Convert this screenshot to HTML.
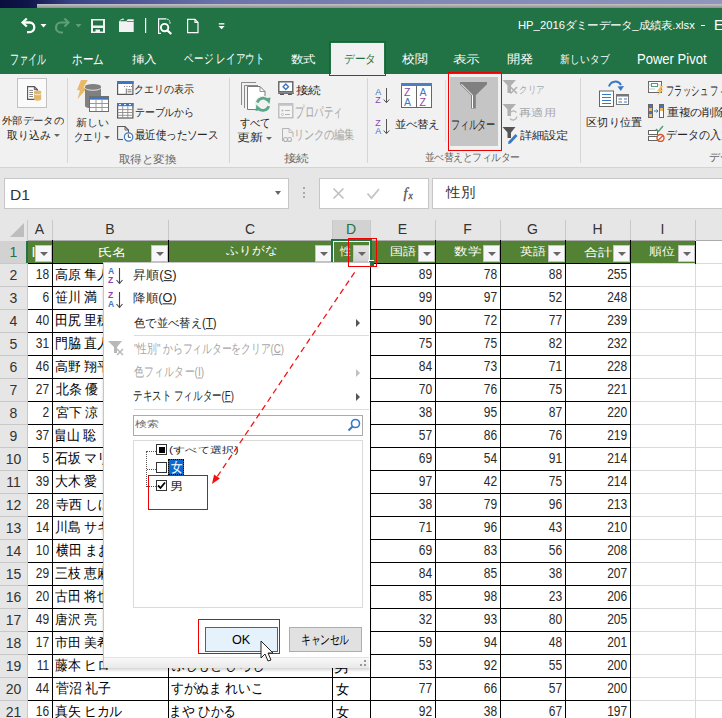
<!DOCTYPE html>
<html><head><meta charset="utf-8"><style>
*{margin:0;padding:0;box-sizing:border-box}
html,body{width:722px;height:718px;overflow:hidden;background:#e6e6e6;font-family:"Liberation Sans",sans-serif;position:relative}
.a{position:absolute}
.nw{white-space:nowrap}
.tab{color:#fff;font-size:13px;top:51px;height:16px;line-height:16px;white-space:nowrap}
.rt{font-size:12px;color:#262626;white-space:nowrap;line-height:14px}
.rd{font-size:12px;color:#a6a6a6;white-space:nowrap;line-height:14px}
.gl{font-size:12px;color:#666;white-space:nowrap;line-height:14px}
.sep{width:1px;background:#d6d6d6;top:78px;height:85px}
.colh{top:220px;height:20px;font-size:14px;color:#333;text-align:center;line-height:20px}
.rowh{left:0;width:27px;height:23px;font-size:14px;color:#333;text-align:center;line-height:23px}
.vl{width:1px;background:#cfcfcf}
.hl{height:1px;background:#cfcfcf}
.cell{font-size:14px;color:#000;white-space:nowrap;line-height:23px;height:23px;overflow:hidden}
.num{text-align:right;letter-spacing:-0.8px;padding-right:3px}
.hc{background:#548235;color:#fff;font-size:14px;line-height:23px;height:23px;white-space:nowrap;overflow:hidden}
.dd{width:17px;height:17px;background:#f7f7fa;border:1px solid #c4c4c4}
.dd:after{content:"";position:absolute;left:3.5px;top:5.5px;border-left:4px solid transparent;border-right:4px solid transparent;border-top:4.5px solid #666}
.mi{font-size:12px;color:#262626;white-space:nowrap;line-height:14px;left:134px}
.mid{font-size:12px;color:#a6a6a6;white-space:nowrap;line-height:14px;left:134px}
.u{text-decoration:underline}
.sub{width:0;height:0;border-top:4px solid transparent;border-bottom:4px solid transparent;border-left:4px solid #555}
</style></head><body>
<div class="a" style="left:0;top:0;width:722px;height:8px;background:linear-gradient(90deg,#0a0e3c 0%,#10154a 4%,#3a4388 10%,#6a72aa 30%,#8088b4 60%,#9096bc 100%)"></div>
<div class="a" style="left:37px;top:4px;width:685px;height:4px;background:linear-gradient(180deg,#c4c4c4,#8f8f8f)"></div>
<div class="a" style="left:0;top:8px;width:722px;height:66px;background:#217346"></div>
<svg class="a" style="left:0;top:8px" width="722" height="36" viewBox="0 8 722 36">
<g fill="none" stroke="#fff" stroke-width="2.3">
<path d="M23 22.5 H29.5 A4.8 4.8 0 0 1 29.5 32.1 H27"/>
<path d="M26.8 18.5 L22.6 22.5 L26.8 26.5"/>
</g>
<path d="M40.5 24 H46.5 L43.5 27.5Z" fill="#fff"/>
<g fill="none" stroke="#5e9f7a" stroke-width="2.2">
<path d="M68 22.5 H61 A5 5 0 0 0 61 32.5 H63"/>
<path d="M64.5 18.5 L68.5 22.5 L64.5 26.5"/>
</g>
<path d="M75.5 24 H81.5 L78.5 27.5Z" fill="#5e9f7a"/>
<path fill="#f2f2f2" fill-rule="evenodd" d="M91 19H105V33H91Z M93 20.5V25.4H103V20.5Z M93 28.1V31.5H95.5V29.4H100V31.5H103V28.1Z"/>
<path fill="#f2f2f2" d="M119 21.2H126.2L127.8 19.2H133.7V32H119Z"/>
<path fill="#217346" d="M127 21.2H133.7V21.9H126.4Z"/>
<path d="M119.6 21 Q120.5 19.3 123.3 19.3" fill="none" stroke="#f2f2f2" stroke-width="0.9"/>
<path d="M122.5 18.3L124.3 19.3L122.5 20.3Z" fill="#f2f2f2"/>
<rect x="145" y="18" width="1.2" height="15" fill="#fff"/>
<g fill="none" stroke="#fff" stroke-width="1.2">
<path d="M161 33.4H158.6V18.8H166.5"/>
<path d="M167.5 19L170 21.5V24.5" stroke-dasharray="1.2,1"/>
<circle cx="164.6" cy="27.6" r="3.7" stroke-width="1.9"/>
<path d="M167.3 30.4L171.3 34" stroke-width="2.2"/>
<path d="M187.6 32.6V19.4H195L198 22.4V32.6Z"/>
<path d="M195 19.4V22.4H198"/>
</g>
<rect x="218.8" y="23.2" width="5.6" height="1.3" fill="#fff"/>
<path d="M218.5 26H224.7L221.6 29.2Z" fill="#fff"/>
</svg>
<div class="a nw" style="left:518.14px;top:17.86px;font-size:13px;line-height:17px;color:#fff;transform-origin:0 0;transform:scale(0.865,0.821);">HP_2016ダミーデータ_成績表.xlsx</div>
<div class="a" style="left:701px;top:25px;width:4px;height:1px;background:#fff"></div>
<div class="a nw" style="left:714.43px;top:15.38px;font-size:13px;line-height:17px;color:#fff;transform-origin:0 0;transform:scale(1.071,1.156);">E</div>
<div class="a nw" style="left:9.82px;top:50.02px;font-size:13px;line-height:17px;color:#fff;transform-origin:0 0;transform:scale(0.688,1.070);">ファイル</div>
<div class="a nw" style="left:71.99px;top:50.02px;font-size:13px;line-height:17px;color:#fff;transform-origin:0 0;transform:scale(0.808,1.070);">ホーム</div>
<div class="a nw" style="left:132.10px;top:52.04px;font-size:13px;line-height:17px;color:#fff;transform-origin:0 0;transform:scale(0.948,0.831);">挿入</div>
<div class="a nw" style="left:183.75px;top:49.59px;font-size:13px;line-height:17px;color:#fff;transform-origin:0 0;transform:scale(0.752,1.027);">ページ レイアウト</div>
<div class="a nw" style="left:291.26px;top:52.04px;font-size:13px;line-height:17px;color:#fff;transform-origin:0 0;transform:scale(0.944,0.831);">数式</div>
<div class="a nw" style="left:401.50px;top:51.00px;font-size:13px;line-height:17px;color:#fff;transform-origin:0 0;transform:scale(0.964,0.900);">校閲</div>
<div class="a nw" style="left:453.06px;top:52.04px;font-size:13px;line-height:17px;color:#fff;transform-origin:0 0;transform:scale(1.037,0.831);">表示</div>
<div class="a nw" style="left:506.70px;top:51.00px;font-size:13px;line-height:17px;color:#fff;transform-origin:0 0;transform:scale(1.000,0.900);">開発</div>
<div class="a nw" style="left:560.13px;top:51.96px;font-size:13px;line-height:17px;color:#fff;transform-origin:0 0;transform:scale(0.767,0.869);">新しいタブ</div>
<div class="a nw" style="left:637.40px;top:49.33px;font-size:13px;line-height:17px;color:#fff;transform-origin:0 0;transform:scale(1.003,1.167);">Power Pivot</div>
<div class="a" style="left:331px;top:43px;width:53px;height:32px;background:#f1f1f1"></div>
<div class="a nw" style="left:343.58px;top:51.25px;font-size:13px;line-height:17px;color:#217346;transform-origin:0 0;transform:scale(0.817,0.917);">データ</div>
<div class="a" style="left:0;top:74px;width:722px;height:94px;background:#f1f1f1;border-bottom:1px solid #d4d4d4"></div>
<div class="a sep" style="left:67px"></div>
<div class="a sep" style="left:229px"></div>
<div class="a sep" style="left:367px"></div>
<div class="a sep" style="left:580px"></div>
<div class="a" style="left:445px;top:80px;width:1px;height:62px;background:#dcdcdc"></div>
<div class="a" style="left:17px;top:78px;width:30px;height:30px;background:#fafafa;border:1px solid #c2c2c2"></div>
<svg class="a" style="left:12px;top:74px" width="40" height="40">
<path d="M15.6 12.6H22.3L25.3 15.6V25.4H15.6Z" fill="#fff" stroke="#555" stroke-width="1.1"/>
<path d="M22.3 12.6V15.6H25.3" fill="none" stroke="#555" stroke-width="1"/>
<path d="M17.3 16.4H21M17.3 18.5H21M17.3 20.5H21M17.3 22.5H21" stroke="#777" stroke-width="0.9"/>
<path d="M22 17.8V25.3A3.6 1.4 0 0 0 29.2 25.3V17.8Z" fill="#e4b86a"/>
<ellipse cx="25.6" cy="17.8" rx="3.6" ry="1.4" fill="#e4b86a"/>
<path d="M22 19.4A3.6 1.4 0 0 0 29.2 19.4" fill="none" stroke="#fff" stroke-width="0.7"/>
</svg>
<div class="a nw" style="left:2.00px;top:114.13px;font-size:12px;line-height:16px;color:#262626;transform-origin:0 0;transform:scale(0.861,0.833);">外部データの</div>
<div class="a nw" style="left:6.59px;top:127.85px;font-size:12px;line-height:16px;color:#262626;transform-origin:0 0;transform:scale(0.913,0.925);">取り込み</div>
<div class="a" style="left:54px;top:134px;border-left:3px solid transparent;border-right:3px solid transparent;border-top:3px solid #666"></div>
<svg class="a" style="left:70px;top:74px" width="45" height="42">
<path d="M11 6H17.8L13.5 13.5L17 14.2L7.5 25L10 16.5L7 16Z" fill="#e9b96a"/>
<path d="M15 13V32A8 2.5 0 0 0 31 32V13Z" fill="#808080"/>
<ellipse cx="23" cy="12.5" rx="8" ry="2.6" fill="#808080"/>
<path d="M15.2 14.2A8 2.6 0 0 0 30.8 14.2" fill="none" stroke="#fff" stroke-width="0.8"/>
<rect x="19.5" y="22.5" width="19" height="15" fill="#fff" stroke="#7a7a7a" stroke-width="1"/>
<rect x="19.5" y="22.5" width="19" height="3.2" fill="#3f76bf"/>
<path d="M19.5 29.5H38.5M19.5 33.5H38.5M26 25.7V37.5M32 25.7V37.5" stroke="#9a9a9a" stroke-width="1"/>
<rect x="19.5" y="22.5" width="19" height="15" fill="none" stroke="#6f6f6f" stroke-width="1"/>
</svg>
<div class="a nw" style="left:75.88px;top:115.83px;font-size:12px;line-height:16px;color:#262626;transform-origin:0 0;transform:scale(0.918,0.833);">新しい</div>
<div class="a nw" style="left:74.45px;top:128.75px;font-size:12px;line-height:16px;color:#262626;transform-origin:0 0;transform:scale(0.774,0.982);">クエリ</div>
<div class="a" style="left:104px;top:136px;border-left:3px solid transparent;border-right:3px solid transparent;border-top:3px solid #666"></div>
<svg class="a" style="left:112px;top:76px" width="30" height="70">
<rect x="5.6" y="5.6" width="15.3" height="12.8" fill="#fff" stroke="#5a5a5a" stroke-width="1.2"/>
<rect x="5" y="5" width="16.5" height="3" fill="#3f76bf"/>
<path d="M12 10.5H13M14.5 10.5H15.5M17 10.5H18M19 10.5H20" stroke="#777" stroke-width="0.9"/>
<path d="M14.3 12.5V18.4M15.5 13.8H19.5M15.5 15.8H19.5" stroke="#777" stroke-width="1"/>
<rect x="5.6" y="27.6" width="15.3" height="14.4" fill="#fff" stroke="#5a5a5a" stroke-width="1.2"/>
<rect x="5" y="27" width="16.5" height="3.2" fill="#3f76bf"/>
<path d="M7 28.6H9M12 28.6H14M17 28.6H19" stroke="#fff" stroke-width="1"/>
<path d="M5.6 33.6H20.9M5.6 36.5H20.9M5.6 39.3H20.9M10.7 30.2V42M15.8 30.2V42" stroke="#8a8a8a" stroke-width="0.9"/>
<path d="M5.6 63.5V50.5H13L16.5 54V58" fill="none" stroke="#5a5a5a" stroke-width="1.1"/>
<path d="M5.6 63.5H11" fill="none" stroke="#5a5a5a" stroke-width="1.1"/>
<path d="M13 50.5V54H16.5" fill="none" stroke="#5a5a5a" stroke-width="0.9"/>
<circle cx="16.6" cy="61" r="4.2" fill="#fff" stroke="#3b78c4" stroke-width="1.2"/>
<path d="M16.3 58.3V61.3H18.8" fill="none" stroke="#444" stroke-width="1"/>
</svg>
<div class="a nw" style="left:134.14px;top:81.57px;font-size:12px;line-height:16px;color:#262626;transform-origin:0 0;transform:scale(0.829,0.909);">クエリの表示</div>
<div class="a nw" style="left:135.18px;top:105.00px;font-size:12px;line-height:16px;color:#262626;transform-origin:0 0;transform:scale(0.816,0.900);">テーブルから</div>
<div class="a nw" style="left:135.14px;top:127.35px;font-size:12px;line-height:16px;color:#262626;transform-origin:0 0;transform:scale(0.865,0.975);">最近使ったソース</div>
<div class="a nw" style="left:119.34px;top:151.50px;font-size:12px;line-height:16px;color:#666;transform-origin:0 0;transform:scale(0.957,0.900);">取得と変換</div>
<svg class="a" style="left:234px;top:76px" width="40" height="40">
<path d="M7.5 29V6.5H22" fill="none" stroke="#8a8a8a" stroke-width="1"/>
<path d="M10.5 32V9.5H24" fill="none" stroke="#8a8a8a" stroke-width="1"/>
<path d="M13.5 33.5V10.5H26L31 15.5V33.5Z" fill="#fff" stroke="#7a7a7a" stroke-width="1"/>
<path d="M26 10.5V15.5H31" fill="none" stroke="#7a7a7a" stroke-width="0.8"/>
<circle cx="29" cy="28.3" r="8.5" fill="#f1f1f1"/>
<path d="M23.3 26.5A6 6 0 0 1 33.6 24.3" fill="none" stroke="#5ba889" stroke-width="2.8"/>
<path d="M34.7 30.1A6 6 0 0 1 24.4 32.3" fill="none" stroke="#5ba889" stroke-width="2.8"/>
<path d="M30.5 22.5L36.5 21.5L35.5 28Z" fill="#5ba889"/>
<path d="M27.5 34.1L21.5 35.1L22.5 28.6Z" fill="#5ba889"/>
</svg>
<div class="a nw" style="left:239.70px;top:114.78px;font-size:12px;line-height:16px;color:#262626;transform-origin:0 0;transform:scale(0.826,0.973);">すべて</div>
<div class="a nw" style="left:236.75px;top:130.42px;font-size:12px;line-height:16px;color:#262626;transform-origin:0 0;transform:scale(1.055,0.892);">更新</div>
<div class="a" style="left:265.5px;top:137px;border-left:3px solid transparent;border-right:3px solid transparent;border-top:3px solid #666"></div>
<svg class="a" style="left:277px;top:80px" width="18" height="64">
<rect x="1.8" y="1.8" width="14" height="10" fill="#fff" stroke="#555" stroke-width="1.3"/>
<path d="M1 13.2H17" stroke="#555" stroke-width="1.2"/>
<path d="M3 14.5H7M11 14.5H15" stroke="#555" stroke-width="1"/>
<path d="M8.8 4L11.5 6.8L8.8 9.6L6.1 6.8Z" fill="none" stroke="#3b78c4" stroke-width="1.4"/>
<rect x="1.8" y="23.8" width="14" height="14" fill="#f4f4f4" stroke="#b4b4b4" stroke-width="1.2"/>
<rect x="1.8" y="23.8" width="14" height="2" fill="#c4c4c4"/>
<circle cx="5.5" cy="30.5" r="1" fill="#b4b4b4"/><circle cx="5.5" cy="34.5" r="1" fill="none" stroke="#b4b4b4" stroke-width="0.8"/>
<path d="M8 30.5H13M8 34.5H13" stroke="#b4b4b4" stroke-width="1"/>
<path d="M5.5 61V48.5H12L16 52.5V57" fill="none" stroke="#b4b4b4" stroke-width="1"/>
<path d="M12 48.5V52.5H16" fill="none" stroke="#b4b4b4" stroke-width="0.8"/>
<path d="M6.5 59.5a2 2 0 0 1 4 0a2 2 0 0 0 4 0a2 2 0 0 0 -4 0a2 2 0 0 1 -4 0" fill="none" stroke="#b4b4b4" stroke-width="1.1"/>
</svg>
<div class="a nw" style="left:295.87px;top:82.92px;font-size:12px;line-height:16px;color:#262626;transform-origin:0 0;transform:scale(1.035,0.892);">接続</div>
<div class="a nw" style="left:295.41px;top:101.98px;font-size:12px;line-height:16px;color:#a6a6a6;transform-origin:0 0;transform:scale(0.795,1.256);">プロパティ</div>
<div class="a nw" style="left:294.48px;top:126.11px;font-size:12px;line-height:16px;color:#a6a6a6;transform-origin:0 0;transform:scale(0.840,1.064);">リンクの編集</div>
<div class="a nw" style="left:284.27px;top:150.82px;font-size:12px;line-height:16px;color:#666;transform-origin:0 0;transform:scale(1.035,0.892);">接続</div>
<svg class="a" style="left:374px;top:84px" width="18" height="52">
<text x="1.3" y="10.5" font-size="9" font-family="Liberation Sans" fill="#3b78c4">A</text>
<text x="1.3" y="18.7" font-size="9" font-family="Liberation Sans" fill="#8e44ad">Z</text>
<path d="M12.5 4V18.5M9.7 15.5L12.5 18.7L15.3 15.5" fill="none" stroke="#555" stroke-width="1"/>
<text x="1.3" y="42" font-size="9" font-family="Liberation Sans" fill="#8e44ad">Z</text>
<text x="1.3" y="50" font-size="9" font-family="Liberation Sans" fill="#3b78c4">A</text>
<path d="M12.5 35V49.5M9.7 46.5L12.5 49.7L15.3 46.5" fill="none" stroke="#555" stroke-width="1"/>
</svg>
<svg class="a" style="left:401px;top:83px" width="31" height="25">
<rect x="0.5" y="0.5" width="30" height="24" fill="#fff" stroke="#666"/>
<rect x="0" y="0" width="31" height="3" fill="#4a7fc1"/>
<path d="M15.5 3V24.5" stroke="#666"/>
<text x="3" y="13" font-size="10.5" font-family="Liberation Sans" fill="#8e44ad">Z</text>
<text x="3" y="23" font-size="10.5" font-family="Liberation Sans" fill="#3b78c4">A</text>
<text x="18.5" y="13" font-size="10.5" font-family="Liberation Sans" fill="#3b78c4">A</text>
<text x="18.5" y="23" font-size="10.5" font-family="Liberation Sans" fill="#8e44ad">Z</text>
</svg>
<div class="a nw" style="left:394.57px;top:116.93px;font-size:12px;line-height:16px;color:#262626;transform-origin:0 0;transform:scale(0.926,0.883);">並べ替え</div>
<div class="a" style="left:450px;top:77px;width:48px;height:69px;background:#c5c5c5"></div>
<svg class="a" style="left:450px;top:77px" width="48" height="40">
<path d="M10 5H37V7.2L25.8 18.2V31.6H21V18.2L10 7.2Z" fill="#808080"/>
<path d="M11.5 7.2L22.5 18.2V31" fill="none" stroke="#fff" stroke-width="1"/>
</svg>
<div class="a nw" style="left:451.06px;top:115.56px;font-size:12px;line-height:16px;color:#262626;transform-origin:0 0;transform:scale(0.736,1.045);">フィルター</div>
<div class="a" style="left:448px;top:72px;width:54px;height:79px;border:1.5px solid #f00000"></div>
<svg class="a" style="left:501px;top:78px" width="20" height="66">
<path d="M1.5 2H15L10 7.5V15H6.5V7.5Z" fill="#b0b0b0"/>
<path d="M9.5 9L16 15.5M16 9L9.5 15.5" stroke="#b0b0b0" stroke-width="1.5"/>
<path d="M1.5 26H15L10 31.5V38H6.5V31.5Z" fill="#b0b0b0"/>
<path d="M8.6 36.5A3.8 3.8 0 0 1 15.4 34.5M15.8 38.5A3.8 3.8 0 0 1 9 40.5" fill="none" stroke="#b8b8b8" stroke-width="1.3"/>
<path d="M1.5 49H14.5L10 54.5V60H6.5V54.5Z" fill="#555"/>
<path d="M7.5 63.5L14.5 56L16.5 58L9.5 65.5L7 66Z" fill="#3b78c4"/>
</svg>
<div class="a nw" style="left:518.96px;top:82.59px;font-size:12px;line-height:16px;color:#a6a6a6;transform-origin:0 0;transform:scale(0.721,0.836);">クリア</div>
<div class="a nw" style="left:518.96px;top:105.68px;font-size:12px;line-height:16px;color:#a6a6a6;transform-origin:0 0;transform:scale(1.041,0.858);">再適用</div>
<div class="a nw" style="left:520.40px;top:127.52px;font-size:12px;line-height:16px;color:#262626;transform-origin:0 0;transform:scale(1.004,0.892);">詳細設定</div>
<div class="a nw" style="left:425.21px;top:150.43px;font-size:12px;line-height:16px;color:#666;transform-origin:0 0;transform:scale(0.787,0.883);">並べ替えとフィルター</div>
<svg class="a" style="left:594px;top:76px" width="40" height="34">
<path d="M15 10.5A6.5 6.5 0 0 1 27 9" fill="none" stroke="#3b78c4" stroke-width="2"/>
<path d="M23.5 10.5L26.8 15L30 10Z" fill="#3b78c4"/>
<rect x="5.5" y="15" width="14" height="15.5" fill="#fff" stroke="#666" stroke-width="1"/>
<path d="M8 18.5H17M8 21.5H17M8 24.5H17M8 27.5H17" stroke="#3b78c4" stroke-width="1"/>
<rect x="22.5" y="18.5" width="12" height="10" fill="#fff" stroke="#777" stroke-width="1"/>
<rect x="22" y="18" width="13" height="2.5" fill="#777"/>
<path d="M24.5 23H28M30 23H33M24.5 26H28M30 26H33" stroke="#3b78c4" stroke-width="1"/>
</svg>
<div class="a nw" style="left:585.96px;top:115.03px;font-size:12px;line-height:16px;color:#262626;transform-origin:0 0;transform:scale(0.940,0.933);">区切り位置</div>
<svg class="a" style="left:647px;top:80px" width="18" height="62">
<rect x="1.5" y="1.5" width="13" height="11" fill="#fff" stroke="#666" stroke-width="1"/>
<path d="M1.5 5H14.5M1.5 9H8" stroke="#bbb" stroke-width="0.8"/>
<rect x="4.5" y="3.5" width="6" height="3" fill="#fff" stroke="#4ea27a" stroke-width="1"/>
<path d="M13.5 6L10 11.5H12.5L10 16L16.5 9.5H14L16 6Z" fill="#efbf5f"/>
<rect x="1.5" y="24.5" width="4" height="13" fill="#fff" stroke="#666" stroke-width="1"/>
<rect x="2" y="25" width="3" height="3" fill="#3f76bf"/><rect x="2" y="28" width="3" height="3" fill="#e8b864"/><rect x="2" y="31" width="3" height="3" fill="#3f76bf"/><rect x="2" y="34" width="3" height="3" fill="#e8b864"/>
<rect x="12.5" y="24.5" width="4" height="13" fill="#fff" stroke="#666" stroke-width="1"/>
<rect x="13" y="25" width="3" height="3" fill="#3f76bf"/><rect x="13" y="28" width="3" height="3" fill="#e8b864"/>
<path d="M7 31H11M9.5 29.5L11 31L9.5 32.5" stroke="#3b78c4" fill="none" stroke-width="1"/>
<rect x="1.5" y="50.5" width="9" height="4" fill="#fff" stroke="#666"/>
<rect x="1.5" y="56.5" width="9" height="4" fill="#fff" stroke="#666"/>
<path d="M9 49L11.5 51.5L16 46" fill="none" stroke="#4ea27a" stroke-width="1.5"/>
<circle cx="13.5" cy="58" r="3.5" fill="#fff" stroke="#d9542b" stroke-width="1.4"/>
<path d="M11 60.5L16 55.5" stroke="#d9542b" stroke-width="1.2"/>
</svg>
<div class="a nw" style="left:665.80px;top:81.53px;font-size:12px;line-height:16px;color:#262626;transform-origin:0 0;transform:scale(0.699,1.090);">フラッシュ フィル</div>
<div class="a nw" style="left:666.50px;top:104.70px;font-size:12px;line-height:16px;color:#262626;transform-origin:0 0;transform:scale(0.975,0.900);">重複の削除</div>
<div class="a nw" style="left:665.59px;top:127.12px;font-size:12px;line-height:16px;color:#262626;transform-origin:0 0;transform:scale(0.910,0.992);">データの入力規則</div>
<div class="a nw" style="left:708.85px;top:149.89px;font-size:12px;line-height:16px;color:#666;transform-origin:0 0;transform:scale(0.949,0.936);">データ ツール</div>
<div class="a" style="left:0;top:168px;width:722px;height:52px;background:#e6e6e6"></div>
<div class="a" style="left:4px;top:178px;width:285px;height:31px;background:#fff;border:1px solid #c6c6c6"></div>
<div class="a nw" style="left:10.39px;top:184.60px;font-size:14px;line-height:18px;color:#333;transform-origin:0 0;transform:scale(1.113,1.100);">D1</div>
<div class="a" style="left:275px;top:191px;width:0;height:0;border-left:3.5px solid transparent;border-right:3.5px solid transparent;border-top:4px solid #666"></div>
<div class="a" style="left:303px;top:187px;width:2px;height:2px;background:#aaa"></div>
<div class="a" style="left:303px;top:191.5px;width:2px;height:2px;background:#aaa"></div>
<div class="a" style="left:303px;top:196px;width:2px;height:2px;background:#aaa"></div>
<div class="a" style="left:319px;top:178px;width:110px;height:31px;background:#fff;border:1px solid #c6c6c6"></div>
<svg class="a" style="left:319px;top:178px" width="110" height="31">
<path d="M14.5 10.5L24.5 20.5M24.5 10.5L14.5 20.5" stroke="#bdbdbd" stroke-width="1.5"/>
<path d="M48.5 15.5L52.5 20L60 11" fill="none" stroke="#c4c4c4" stroke-width="1.8"/>
<text x="84.5" y="20" font-size="14" font-style="italic" font-family="Liberation Serif" fill="#555" stroke="#555" stroke-width="0.3">f</text>
<text x="89.5" y="20.5" font-size="9.5" font-style="italic" font-family="Liberation Serif" fill="#555" stroke="#555" stroke-width="0.3">x</text>
</svg>
<div class="a" style="left:432px;top:178px;width:300px;height:31px;background:#fff;border:1px solid #c6c6c6"></div>
<div class="a nw" style="left:446.00px;top:182.85px;font-size:14px;line-height:18px;color:#333;transform-origin:0 0;transform:scale(1.048,1.015);">性別</div>
<div class="a" style="left:0;top:220px;width:722px;height:21px;background:#e6e6e6;border-bottom:1px solid #ababab"></div>
<svg class="a" style="left:0;top:220px" width="27" height="20"><path d="M24 3V17H10Z" fill="#bdbdbd"/></svg>
<div class="a" style="left:332px;top:220px;width:38px;height:20px;background:#d2d2d2"></div>
<div class="a" style="left:27px;top:221px;width:25px;font-size:14px;line-height:16px;text-align:center;color:#333">A</div>
<div class="a vl" style="left:52px;top:220px;height:20px;background:#c8c8c8"></div>
<div class="a" style="left:52px;top:221px;width:116px;font-size:14px;line-height:16px;text-align:center;color:#333">B</div>
<div class="a vl" style="left:168px;top:220px;height:20px;background:#c8c8c8"></div>
<div class="a" style="left:168px;top:221px;width:164px;font-size:14px;line-height:16px;text-align:center;color:#333">C</div>
<div class="a vl" style="left:332px;top:220px;height:20px;background:#c8c8c8"></div>
<div class="a" style="left:332px;top:221px;width:38px;font-size:14px;line-height:16px;text-align:center;color:#217346">D</div>
<div class="a vl" style="left:370px;top:220px;height:20px;background:#c8c8c8"></div>
<div class="a" style="left:370px;top:221px;width:65px;font-size:14px;line-height:16px;text-align:center;color:#333">E</div>
<div class="a vl" style="left:435px;top:220px;height:20px;background:#c8c8c8"></div>
<div class="a" style="left:435px;top:221px;width:65px;font-size:14px;line-height:16px;text-align:center;color:#333">F</div>
<div class="a vl" style="left:500px;top:220px;height:20px;background:#c8c8c8"></div>
<div class="a" style="left:500px;top:221px;width:65px;font-size:14px;line-height:16px;text-align:center;color:#333">G</div>
<div class="a vl" style="left:565px;top:220px;height:20px;background:#c8c8c8"></div>
<div class="a" style="left:565px;top:221px;width:65px;font-size:14px;line-height:16px;text-align:center;color:#333">H</div>
<div class="a vl" style="left:630px;top:220px;height:20px;background:#c8c8c8"></div>
<div class="a" style="left:630px;top:221px;width:65px;font-size:14px;line-height:16px;text-align:center;color:#333">I</div>
<div class="a vl" style="left:695px;top:220px;height:20px;background:#c8c8c8"></div>
<div class="a" style="left:695px;top:221px;width:65px;font-size:14px;line-height:16px;text-align:center;color:#333">J</div>
<div class="a vl" style="left:760px;top:220px;height:20px;background:#c8c8c8"></div>
<div class="a vl" style="left:27px;top:220px;height:20px;background:#c8c8c8"></div>
<div class="a" style="left:28px;top:241px;width:694px;height:477px;background:#fff"></div>
<div class="a" style="left:0;top:240px;width:27px;height:478px;background:#e6e6e6"></div>
<div class="a" style="left:0;top:241px;width:27px;height:22px;background:#d2d2d2"></div>
<div class="a" style="left:0;top:244px;width:27px;font-size:14px;line-height:16px;text-align:center;color:#217346">1</div>
<div class="a hl" style="left:0;top:263px;width:27px;background:#c8c8c8"></div>
<div class="a" style="left:0;top:267px;width:27px;font-size:14px;line-height:16px;text-align:center;color:#333">2</div>
<div class="a hl" style="left:0;top:286px;width:27px;background:#c8c8c8"></div>
<div class="a" style="left:0;top:290px;width:27px;font-size:14px;line-height:16px;text-align:center;color:#333">3</div>
<div class="a hl" style="left:0;top:309px;width:27px;background:#c8c8c8"></div>
<div class="a" style="left:0;top:313px;width:27px;font-size:14px;line-height:16px;text-align:center;color:#333">4</div>
<div class="a hl" style="left:0;top:332px;width:27px;background:#c8c8c8"></div>
<div class="a" style="left:0;top:336px;width:27px;font-size:14px;line-height:16px;text-align:center;color:#333">5</div>
<div class="a hl" style="left:0;top:355px;width:27px;background:#c8c8c8"></div>
<div class="a" style="left:0;top:359px;width:27px;font-size:14px;line-height:16px;text-align:center;color:#333">6</div>
<div class="a hl" style="left:0;top:378px;width:27px;background:#c8c8c8"></div>
<div class="a" style="left:0;top:382px;width:27px;font-size:14px;line-height:16px;text-align:center;color:#333">7</div>
<div class="a hl" style="left:0;top:401px;width:27px;background:#c8c8c8"></div>
<div class="a" style="left:0;top:405px;width:27px;font-size:14px;line-height:16px;text-align:center;color:#333">8</div>
<div class="a hl" style="left:0;top:424px;width:27px;background:#c8c8c8"></div>
<div class="a" style="left:0;top:428px;width:27px;font-size:14px;line-height:16px;text-align:center;color:#333">9</div>
<div class="a hl" style="left:0;top:447px;width:27px;background:#c8c8c8"></div>
<div class="a" style="left:0;top:451px;width:27px;font-size:14px;line-height:16px;text-align:center;color:#333">10</div>
<div class="a hl" style="left:0;top:470px;width:27px;background:#c8c8c8"></div>
<div class="a" style="left:0;top:474px;width:27px;font-size:14px;line-height:16px;text-align:center;color:#333">11</div>
<div class="a hl" style="left:0;top:493px;width:27px;background:#c8c8c8"></div>
<div class="a" style="left:0;top:497px;width:27px;font-size:14px;line-height:16px;text-align:center;color:#333">12</div>
<div class="a hl" style="left:0;top:516px;width:27px;background:#c8c8c8"></div>
<div class="a" style="left:0;top:520px;width:27px;font-size:14px;line-height:16px;text-align:center;color:#333">13</div>
<div class="a hl" style="left:0;top:539px;width:27px;background:#c8c8c8"></div>
<div class="a" style="left:0;top:543px;width:27px;font-size:14px;line-height:16px;text-align:center;color:#333">14</div>
<div class="a hl" style="left:0;top:562px;width:27px;background:#c8c8c8"></div>
<div class="a" style="left:0;top:566px;width:27px;font-size:14px;line-height:16px;text-align:center;color:#333">15</div>
<div class="a hl" style="left:0;top:585px;width:27px;background:#c8c8c8"></div>
<div class="a" style="left:0;top:589px;width:27px;font-size:14px;line-height:16px;text-align:center;color:#333">16</div>
<div class="a hl" style="left:0;top:608px;width:27px;background:#c8c8c8"></div>
<div class="a" style="left:0;top:612px;width:27px;font-size:14px;line-height:16px;text-align:center;color:#333">17</div>
<div class="a hl" style="left:0;top:631px;width:27px;background:#c8c8c8"></div>
<div class="a" style="left:0;top:635px;width:27px;font-size:14px;line-height:16px;text-align:center;color:#333">18</div>
<div class="a hl" style="left:0;top:654px;width:27px;background:#c8c8c8"></div>
<div class="a" style="left:0;top:658px;width:27px;font-size:14px;line-height:16px;text-align:center;color:#333">19</div>
<div class="a hl" style="left:0;top:677px;width:27px;background:#c8c8c8"></div>
<div class="a" style="left:0;top:681px;width:27px;font-size:14px;line-height:16px;text-align:center;color:#333">20</div>
<div class="a hl" style="left:0;top:700px;width:27px;background:#c8c8c8"></div>
<div class="a" style="left:0;top:704px;width:27px;font-size:14px;line-height:16px;text-align:center;color:#333">21</div>
<div class="a hl" style="left:0;top:723px;width:27px;background:#c8c8c8"></div>
<div class="a" style="left:27px;top:240px;width:1px;height:478px;background:#c8c8c8"></div>
<div class="a" style="left:26px;top:241px;width:2px;height:22px;background:#217346"></div>
<div class="a hl" style="left:630px;top:263px;width:92px;background:#dadada"></div>
<div class="a hl" style="left:630px;top:286px;width:92px;background:#dadada"></div>
<div class="a hl" style="left:630px;top:309px;width:92px;background:#dadada"></div>
<div class="a hl" style="left:630px;top:332px;width:92px;background:#dadada"></div>
<div class="a hl" style="left:630px;top:355px;width:92px;background:#dadada"></div>
<div class="a hl" style="left:630px;top:378px;width:92px;background:#dadada"></div>
<div class="a hl" style="left:630px;top:401px;width:92px;background:#dadada"></div>
<div class="a hl" style="left:630px;top:424px;width:92px;background:#dadada"></div>
<div class="a hl" style="left:630px;top:447px;width:92px;background:#dadada"></div>
<div class="a hl" style="left:630px;top:470px;width:92px;background:#dadada"></div>
<div class="a hl" style="left:630px;top:493px;width:92px;background:#dadada"></div>
<div class="a hl" style="left:630px;top:516px;width:92px;background:#dadada"></div>
<div class="a hl" style="left:630px;top:539px;width:92px;background:#dadada"></div>
<div class="a hl" style="left:630px;top:562px;width:92px;background:#dadada"></div>
<div class="a hl" style="left:630px;top:585px;width:92px;background:#dadada"></div>
<div class="a hl" style="left:630px;top:608px;width:92px;background:#dadada"></div>
<div class="a hl" style="left:630px;top:631px;width:92px;background:#dadada"></div>
<div class="a hl" style="left:630px;top:654px;width:92px;background:#dadada"></div>
<div class="a hl" style="left:630px;top:677px;width:92px;background:#dadada"></div>
<div class="a hl" style="left:630px;top:700px;width:92px;background:#dadada"></div>
<div class="a hl" style="left:630px;top:723px;width:92px;background:#dadada"></div>
<div class="a vl" style="left:695px;top:240px;height:478px;background:#dadada"></div>
<div class="a" style="left:28px;top:241px;width:667px;height:22px;background:#548235"></div>
<div class="a nw" style="left:31.50px;top:242.30px;font-size:14px;line-height:18px;color:#fff;transform-origin:0 0;transform:scale(1.000,1.050);">I</div>
<div class="a nw" style="left:98.03px;top:245.00px;font-size:14px;line-height:18px;color:#fff;transform-origin:0 0;transform:scale(0.972,0.750);">氏名</div>
<div class="a nw" style="left:225.70px;top:243.27px;font-size:14px;line-height:18px;color:#fff;transform-origin:0 0;transform:scale(0.925,0.808);">ふりがな</div>
<div class="a nw" style="left:339.70px;top:244.08px;font-size:14px;line-height:18px;color:#fff;transform-origin:0 0;transform:scale(0.793,0.808);">性</div>
<div class="a nw" style="left:390.04px;top:244.08px;font-size:14px;line-height:18px;color:#fff;transform-origin:0 0;transform:scale(0.958,0.808);">国語</div>
<div class="a nw" style="left:454.21px;top:244.08px;font-size:14px;line-height:18px;color:#fff;transform-origin:0 0;transform:scale(0.992,0.808);">数学</div>
<div class="a nw" style="left:520.00px;top:244.08px;font-size:14px;line-height:18px;color:#fff;transform-origin:0 0;transform:scale(0.944,0.808);">英語</div>
<div class="a nw" style="left:584.22px;top:245.00px;font-size:14px;line-height:18px;color:#fff;transform-origin:0 0;transform:scale(0.977,0.750);">合計</div>
<div class="a nw" style="left:649.05px;top:244.08px;font-size:14px;line-height:18px;color:#fff;transform-origin:0 0;transform:scale(0.952,0.808);">順位</div>
<div class="a dd" style="left:35px;top:245px"></div>
<div class="a dd" style="left:151px;top:245px"></div>
<div class="a dd" style="left:315px;top:245px"></div>
<div class="a dd" style="left:353px;top:245px;background:linear-gradient(#e4e4e4,#d4d4d4)"></div>
<div class="a dd" style="left:418px;top:245px"></div>
<div class="a dd" style="left:483px;top:245px"></div>
<div class="a dd" style="left:548px;top:245px"></div>
<div class="a dd" style="left:613px;top:245px"></div>
<div class="a dd" style="left:678px;top:245px"></div>
<div class="a" style="left:27px;top:264.6px;width:22.2px;font-size:14px;line-height:18px;text-align:right;color:#2a2a2a;transform-origin:100% 0;transform:scaleX(0.857);white-space:nowrap">18</div>
<div class="a nw" style="left:54.79px;top:266.37px;font-size:14px;line-height:18px;color:#000;transform-origin:0 0;transform:scale(0.910,0.914);">高原 隼人</div>
<div class="a nw" style="left:170.79px;top:265.00px;font-size:14px;line-height:18px;color:#000;transform-origin:0 0;transform:scale(0.910,1.000);">たかはら はやと</div>
<div class="a nw" style="left:334.49px;top:265.75px;font-size:14px;line-height:18px;color:#000;transform-origin:0 0;transform:scale(1.109,1.083);">男</div>
<div class="a" style="left:370px;top:264.6px;width:62.2px;font-size:14px;line-height:18px;text-align:right;color:#2a2a2a;transform-origin:100% 0;transform:scaleX(0.857);white-space:nowrap">89</div>
<div class="a" style="left:435px;top:264.6px;width:62.2px;font-size:14px;line-height:18px;text-align:right;color:#2a2a2a;transform-origin:100% 0;transform:scaleX(0.857);white-space:nowrap">78</div>
<div class="a" style="left:500px;top:264.6px;width:62.2px;font-size:14px;line-height:18px;text-align:right;color:#2a2a2a;transform-origin:100% 0;transform:scaleX(0.857);white-space:nowrap">88</div>
<div class="a" style="left:565px;top:264.6px;width:62.2px;font-size:14px;line-height:18px;text-align:right;color:#2a2a2a;transform-origin:100% 0;transform:scaleX(0.857);white-space:nowrap">255</div>
<div class="a" style="left:27px;top:287.6px;width:22.2px;font-size:14px;line-height:18px;text-align:right;color:#2a2a2a;transform-origin:100% 0;transform:scaleX(0.857);white-space:nowrap">6</div>
<div class="a nw" style="left:54.79px;top:288.25px;font-size:14px;line-height:18px;color:#000;transform-origin:0 0;transform:scale(0.910,0.985);">笹川 満</div>
<div class="a nw" style="left:169.88px;top:288.00px;font-size:14px;line-height:18px;color:#000;transform-origin:0 0;transform:scale(0.910,1.000);">ささがわ みつる</div>
<div class="a nw" style="left:334.49px;top:288.75px;font-size:14px;line-height:18px;color:#000;transform-origin:0 0;transform:scale(1.109,1.083);">男</div>
<div class="a" style="left:370px;top:287.6px;width:62.2px;font-size:14px;line-height:18px;text-align:right;color:#2a2a2a;transform-origin:100% 0;transform:scaleX(0.857);white-space:nowrap">99</div>
<div class="a" style="left:435px;top:287.6px;width:62.2px;font-size:14px;line-height:18px;text-align:right;color:#2a2a2a;transform-origin:100% 0;transform:scaleX(0.857);white-space:nowrap">97</div>
<div class="a" style="left:500px;top:287.6px;width:62.2px;font-size:14px;line-height:18px;text-align:right;color:#2a2a2a;transform-origin:100% 0;transform:scaleX(0.857);white-space:nowrap">52</div>
<div class="a" style="left:565px;top:287.6px;width:62.2px;font-size:14px;line-height:18px;text-align:right;color:#2a2a2a;transform-origin:100% 0;transform:scaleX(0.857);white-space:nowrap">248</div>
<div class="a" style="left:27px;top:310.6px;width:22.2px;font-size:14px;line-height:18px;text-align:right;color:#2a2a2a;transform-origin:100% 0;transform:scaleX(0.857);white-space:nowrap">40</div>
<div class="a nw" style="left:54.79px;top:311.25px;font-size:14px;line-height:18px;color:#000;transform-origin:0 0;transform:scale(0.910,0.985);">田尻 里穂</div>
<div class="a nw" style="left:170.79px;top:311.00px;font-size:14px;line-height:18px;color:#000;transform-origin:0 0;transform:scale(0.910,1.000);">たじり りほ</div>
<div class="a nw" style="left:335.60px;top:312.00px;font-size:14px;line-height:18px;color:#000;transform-origin:0 0;transform:scale(0.938,1.000);">女</div>
<div class="a" style="left:370px;top:310.6px;width:62.2px;font-size:14px;line-height:18px;text-align:right;color:#2a2a2a;transform-origin:100% 0;transform:scaleX(0.857);white-space:nowrap">90</div>
<div class="a" style="left:435px;top:310.6px;width:62.2px;font-size:14px;line-height:18px;text-align:right;color:#2a2a2a;transform-origin:100% 0;transform:scaleX(0.857);white-space:nowrap">72</div>
<div class="a" style="left:500px;top:310.6px;width:62.2px;font-size:14px;line-height:18px;text-align:right;color:#2a2a2a;transform-origin:100% 0;transform:scaleX(0.857);white-space:nowrap">77</div>
<div class="a" style="left:565px;top:310.6px;width:62.2px;font-size:14px;line-height:18px;text-align:right;color:#2a2a2a;transform-origin:100% 0;transform:scaleX(0.857);white-space:nowrap">239</div>
<div class="a" style="left:27px;top:333.6px;width:22.2px;font-size:14px;line-height:18px;text-align:right;color:#2a2a2a;transform-origin:100% 0;transform:scaleX(0.857);white-space:nowrap">31</div>
<div class="a nw" style="left:54.79px;top:334.25px;font-size:14px;line-height:18px;color:#000;transform-origin:0 0;transform:scale(0.910,0.985);">門脇 直人</div>
<div class="a nw" style="left:170.79px;top:334.31px;font-size:14px;line-height:18px;color:#000;transform-origin:0 0;transform:scale(0.910,0.923);">かどわき なおと</div>
<div class="a nw" style="left:334.49px;top:334.75px;font-size:14px;line-height:18px;color:#000;transform-origin:0 0;transform:scale(1.109,1.083);">男</div>
<div class="a" style="left:370px;top:333.6px;width:62.2px;font-size:14px;line-height:18px;text-align:right;color:#2a2a2a;transform-origin:100% 0;transform:scaleX(0.857);white-space:nowrap">75</div>
<div class="a" style="left:435px;top:333.6px;width:62.2px;font-size:14px;line-height:18px;text-align:right;color:#2a2a2a;transform-origin:100% 0;transform:scaleX(0.857);white-space:nowrap">75</div>
<div class="a" style="left:500px;top:333.6px;width:62.2px;font-size:14px;line-height:18px;text-align:right;color:#2a2a2a;transform-origin:100% 0;transform:scaleX(0.857);white-space:nowrap">82</div>
<div class="a" style="left:565px;top:333.6px;width:62.2px;font-size:14px;line-height:18px;text-align:right;color:#2a2a2a;transform-origin:100% 0;transform:scaleX(0.857);white-space:nowrap">232</div>
<div class="a" style="left:27px;top:356.6px;width:22.2px;font-size:14px;line-height:18px;text-align:right;color:#2a2a2a;transform-origin:100% 0;transform:scaleX(0.857);white-space:nowrap">46</div>
<div class="a nw" style="left:54.79px;top:358.37px;font-size:14px;line-height:18px;color:#000;transform-origin:0 0;transform:scale(0.910,0.914);">高野 翔平</div>
<div class="a nw" style="left:170.79px;top:357.00px;font-size:14px;line-height:18px;color:#000;transform-origin:0 0;transform:scale(0.910,1.000);">たかの しょうへい</div>
<div class="a nw" style="left:334.49px;top:357.75px;font-size:14px;line-height:18px;color:#000;transform-origin:0 0;transform:scale(1.109,1.083);">男</div>
<div class="a" style="left:370px;top:356.6px;width:62.2px;font-size:14px;line-height:18px;text-align:right;color:#2a2a2a;transform-origin:100% 0;transform:scaleX(0.857);white-space:nowrap">84</div>
<div class="a" style="left:435px;top:356.6px;width:62.2px;font-size:14px;line-height:18px;text-align:right;color:#2a2a2a;transform-origin:100% 0;transform:scaleX(0.857);white-space:nowrap">73</div>
<div class="a" style="left:500px;top:356.6px;width:62.2px;font-size:14px;line-height:18px;text-align:right;color:#2a2a2a;transform-origin:100% 0;transform:scaleX(0.857);white-space:nowrap">71</div>
<div class="a" style="left:565px;top:356.6px;width:62.2px;font-size:14px;line-height:18px;text-align:right;color:#2a2a2a;transform-origin:100% 0;transform:scaleX(0.857);white-space:nowrap">228</div>
<div class="a" style="left:27px;top:379.6px;width:22.2px;font-size:14px;line-height:18px;text-align:right;color:#2a2a2a;transform-origin:100% 0;transform:scaleX(0.857);white-space:nowrap">27</div>
<div class="a nw" style="left:55.70px;top:380.25px;font-size:14px;line-height:18px;color:#000;transform-origin:0 0;transform:scale(0.910,0.985);">北条 優</div>
<div class="a nw" style="left:170.79px;top:380.00px;font-size:14px;line-height:18px;color:#000;transform-origin:0 0;transform:scale(0.910,1.000);">ほうじょう ゆう</div>
<div class="a nw" style="left:334.49px;top:380.75px;font-size:14px;line-height:18px;color:#000;transform-origin:0 0;transform:scale(1.109,1.083);">男</div>
<div class="a" style="left:370px;top:379.6px;width:62.2px;font-size:14px;line-height:18px;text-align:right;color:#2a2a2a;transform-origin:100% 0;transform:scaleX(0.857);white-space:nowrap">70</div>
<div class="a" style="left:435px;top:379.6px;width:62.2px;font-size:14px;line-height:18px;text-align:right;color:#2a2a2a;transform-origin:100% 0;transform:scaleX(0.857);white-space:nowrap">76</div>
<div class="a" style="left:500px;top:379.6px;width:62.2px;font-size:14px;line-height:18px;text-align:right;color:#2a2a2a;transform-origin:100% 0;transform:scaleX(0.857);white-space:nowrap">75</div>
<div class="a" style="left:565px;top:379.6px;width:62.2px;font-size:14px;line-height:18px;text-align:right;color:#2a2a2a;transform-origin:100% 0;transform:scaleX(0.857);white-space:nowrap">221</div>
<div class="a" style="left:27px;top:402.6px;width:22.2px;font-size:14px;line-height:18px;text-align:right;color:#2a2a2a;transform-origin:100% 0;transform:scaleX(0.857);white-space:nowrap">2</div>
<div class="a nw" style="left:55.70px;top:404.37px;font-size:14px;line-height:18px;color:#000;transform-origin:0 0;transform:scale(0.910,0.914);">宮下 涼</div>
<div class="a nw" style="left:170.79px;top:403.00px;font-size:14px;line-height:18px;color:#000;transform-origin:0 0;transform:scale(0.910,1.000);">みやした りょう</div>
<div class="a nw" style="left:334.49px;top:403.75px;font-size:14px;line-height:18px;color:#000;transform-origin:0 0;transform:scale(1.109,1.083);">男</div>
<div class="a" style="left:370px;top:402.6px;width:62.2px;font-size:14px;line-height:18px;text-align:right;color:#2a2a2a;transform-origin:100% 0;transform:scaleX(0.857);white-space:nowrap">38</div>
<div class="a" style="left:435px;top:402.6px;width:62.2px;font-size:14px;line-height:18px;text-align:right;color:#2a2a2a;transform-origin:100% 0;transform:scaleX(0.857);white-space:nowrap">95</div>
<div class="a" style="left:500px;top:402.6px;width:62.2px;font-size:14px;line-height:18px;text-align:right;color:#2a2a2a;transform-origin:100% 0;transform:scaleX(0.857);white-space:nowrap">87</div>
<div class="a" style="left:565px;top:402.6px;width:62.2px;font-size:14px;line-height:18px;text-align:right;color:#2a2a2a;transform-origin:100% 0;transform:scaleX(0.857);white-space:nowrap">220</div>
<div class="a" style="left:27px;top:425.6px;width:22.2px;font-size:14px;line-height:18px;text-align:right;color:#2a2a2a;transform-origin:100% 0;transform:scaleX(0.857);white-space:nowrap">37</div>
<div class="a nw" style="left:53.88px;top:426.25px;font-size:14px;line-height:18px;color:#000;transform-origin:0 0;transform:scale(0.910,0.985);">畠山 聡</div>
<div class="a nw" style="left:170.79px;top:426.00px;font-size:14px;line-height:18px;color:#000;transform-origin:0 0;transform:scale(0.910,1.000);">はたけやま さとし</div>
<div class="a nw" style="left:334.49px;top:426.75px;font-size:14px;line-height:18px;color:#000;transform-origin:0 0;transform:scale(1.109,1.083);">男</div>
<div class="a" style="left:370px;top:425.6px;width:62.2px;font-size:14px;line-height:18px;text-align:right;color:#2a2a2a;transform-origin:100% 0;transform:scaleX(0.857);white-space:nowrap">57</div>
<div class="a" style="left:435px;top:425.6px;width:62.2px;font-size:14px;line-height:18px;text-align:right;color:#2a2a2a;transform-origin:100% 0;transform:scaleX(0.857);white-space:nowrap">86</div>
<div class="a" style="left:500px;top:425.6px;width:62.2px;font-size:14px;line-height:18px;text-align:right;color:#2a2a2a;transform-origin:100% 0;transform:scaleX(0.857);white-space:nowrap">76</div>
<div class="a" style="left:565px;top:425.6px;width:62.2px;font-size:14px;line-height:18px;text-align:right;color:#2a2a2a;transform-origin:100% 0;transform:scaleX(0.857);white-space:nowrap">219</div>
<div class="a" style="left:27px;top:448.6px;width:22.2px;font-size:14px;line-height:18px;text-align:right;color:#2a2a2a;transform-origin:100% 0;transform:scaleX(0.857);white-space:nowrap">5</div>
<div class="a nw" style="left:54.79px;top:449.25px;font-size:14px;line-height:18px;color:#000;transform-origin:0 0;transform:scale(0.910,0.985);">石坂 マリ</div>
<div class="a nw" style="left:170.79px;top:450.23px;font-size:14px;line-height:18px;color:#000;transform-origin:0 0;transform:scale(0.910,0.923);">いしざか まり</div>
<div class="a nw" style="left:335.60px;top:450.00px;font-size:14px;line-height:18px;color:#000;transform-origin:0 0;transform:scale(0.938,1.000);">女</div>
<div class="a" style="left:370px;top:448.6px;width:62.2px;font-size:14px;line-height:18px;text-align:right;color:#2a2a2a;transform-origin:100% 0;transform:scaleX(0.857);white-space:nowrap">69</div>
<div class="a" style="left:435px;top:448.6px;width:62.2px;font-size:14px;line-height:18px;text-align:right;color:#2a2a2a;transform-origin:100% 0;transform:scaleX(0.857);white-space:nowrap">54</div>
<div class="a" style="left:500px;top:448.6px;width:62.2px;font-size:14px;line-height:18px;text-align:right;color:#2a2a2a;transform-origin:100% 0;transform:scaleX(0.857);white-space:nowrap">91</div>
<div class="a" style="left:565px;top:448.6px;width:62.2px;font-size:14px;line-height:18px;text-align:right;color:#2a2a2a;transform-origin:100% 0;transform:scaleX(0.857);white-space:nowrap">214</div>
<div class="a" style="left:27px;top:471.6px;width:22.2px;font-size:14px;line-height:18px;text-align:right;color:#2a2a2a;transform-origin:100% 0;transform:scaleX(0.857);white-space:nowrap">39</div>
<div class="a nw" style="left:54.79px;top:472.25px;font-size:14px;line-height:18px;color:#000;transform-origin:0 0;transform:scale(0.910,0.985);">大木 愛</div>
<div class="a nw" style="left:170.79px;top:472.00px;font-size:14px;line-height:18px;color:#000;transform-origin:0 0;transform:scale(0.910,1.000);">おおき あい</div>
<div class="a nw" style="left:335.60px;top:473.00px;font-size:14px;line-height:18px;color:#000;transform-origin:0 0;transform:scale(0.938,1.000);">女</div>
<div class="a" style="left:370px;top:471.6px;width:62.2px;font-size:14px;line-height:18px;text-align:right;color:#2a2a2a;transform-origin:100% 0;transform:scaleX(0.857);white-space:nowrap">97</div>
<div class="a" style="left:435px;top:471.6px;width:62.2px;font-size:14px;line-height:18px;text-align:right;color:#2a2a2a;transform-origin:100% 0;transform:scaleX(0.857);white-space:nowrap">42</div>
<div class="a" style="left:500px;top:471.6px;width:62.2px;font-size:14px;line-height:18px;text-align:right;color:#2a2a2a;transform-origin:100% 0;transform:scaleX(0.857);white-space:nowrap">75</div>
<div class="a" style="left:565px;top:471.6px;width:62.2px;font-size:14px;line-height:18px;text-align:right;color:#2a2a2a;transform-origin:100% 0;transform:scaleX(0.857);white-space:nowrap">214</div>
<div class="a" style="left:27px;top:494.6px;width:22.2px;font-size:14px;line-height:18px;text-align:right;color:#2a2a2a;transform-origin:100% 0;transform:scaleX(0.857);white-space:nowrap">28</div>
<div class="a nw" style="left:55.70px;top:496.37px;font-size:14px;line-height:18px;color:#000;transform-origin:0 0;transform:scale(0.910,0.914);">寺西 しほ</div>
<div class="a nw" style="left:170.79px;top:495.00px;font-size:14px;line-height:18px;color:#000;transform-origin:0 0;transform:scale(0.910,1.000);">てらにし しほ</div>
<div class="a nw" style="left:335.60px;top:496.00px;font-size:14px;line-height:18px;color:#000;transform-origin:0 0;transform:scale(0.938,1.000);">女</div>
<div class="a" style="left:370px;top:494.6px;width:62.2px;font-size:14px;line-height:18px;text-align:right;color:#2a2a2a;transform-origin:100% 0;transform:scaleX(0.857);white-space:nowrap">38</div>
<div class="a" style="left:435px;top:494.6px;width:62.2px;font-size:14px;line-height:18px;text-align:right;color:#2a2a2a;transform-origin:100% 0;transform:scaleX(0.857);white-space:nowrap">79</div>
<div class="a" style="left:500px;top:494.6px;width:62.2px;font-size:14px;line-height:18px;text-align:right;color:#2a2a2a;transform-origin:100% 0;transform:scaleX(0.857);white-space:nowrap">96</div>
<div class="a" style="left:565px;top:494.6px;width:62.2px;font-size:14px;line-height:18px;text-align:right;color:#2a2a2a;transform-origin:100% 0;transform:scaleX(0.857);white-space:nowrap">213</div>
<div class="a" style="left:27px;top:517.6px;width:22.2px;font-size:14px;line-height:18px;text-align:right;color:#2a2a2a;transform-origin:100% 0;transform:scaleX(0.857);white-space:nowrap">14</div>
<div class="a nw" style="left:54.79px;top:518.25px;font-size:14px;line-height:18px;color:#000;transform-origin:0 0;transform:scale(0.910,0.985);">川島 サキ</div>
<div class="a nw" style="left:170.79px;top:518.00px;font-size:14px;line-height:18px;color:#000;transform-origin:0 0;transform:scale(0.910,1.000);">かわしま さき</div>
<div class="a nw" style="left:335.60px;top:519.00px;font-size:14px;line-height:18px;color:#000;transform-origin:0 0;transform:scale(0.938,1.000);">女</div>
<div class="a" style="left:370px;top:517.6px;width:62.2px;font-size:14px;line-height:18px;text-align:right;color:#2a2a2a;transform-origin:100% 0;transform:scaleX(0.857);white-space:nowrap">71</div>
<div class="a" style="left:435px;top:517.6px;width:62.2px;font-size:14px;line-height:18px;text-align:right;color:#2a2a2a;transform-origin:100% 0;transform:scaleX(0.857);white-space:nowrap">96</div>
<div class="a" style="left:500px;top:517.6px;width:62.2px;font-size:14px;line-height:18px;text-align:right;color:#2a2a2a;transform-origin:100% 0;transform:scaleX(0.857);white-space:nowrap">43</div>
<div class="a" style="left:565px;top:517.6px;width:62.2px;font-size:14px;line-height:18px;text-align:right;color:#2a2a2a;transform-origin:100% 0;transform:scaleX(0.857);white-space:nowrap">210</div>
<div class="a" style="left:27px;top:540.6px;width:22.2px;font-size:14px;line-height:18px;text-align:right;color:#2a2a2a;transform-origin:100% 0;transform:scaleX(0.857);white-space:nowrap">10</div>
<div class="a nw" style="left:55.70px;top:541.25px;font-size:14px;line-height:18px;color:#000;transform-origin:0 0;transform:scale(0.910,0.985);">横田 まお</div>
<div class="a nw" style="left:169.88px;top:541.00px;font-size:14px;line-height:18px;color:#000;transform-origin:0 0;transform:scale(0.910,1.000);">よこた まお</div>
<div class="a nw" style="left:335.60px;top:542.00px;font-size:14px;line-height:18px;color:#000;transform-origin:0 0;transform:scale(0.938,1.000);">女</div>
<div class="a" style="left:370px;top:540.6px;width:62.2px;font-size:14px;line-height:18px;text-align:right;color:#2a2a2a;transform-origin:100% 0;transform:scaleX(0.857);white-space:nowrap">69</div>
<div class="a" style="left:435px;top:540.6px;width:62.2px;font-size:14px;line-height:18px;text-align:right;color:#2a2a2a;transform-origin:100% 0;transform:scaleX(0.857);white-space:nowrap">83</div>
<div class="a" style="left:500px;top:540.6px;width:62.2px;font-size:14px;line-height:18px;text-align:right;color:#2a2a2a;transform-origin:100% 0;transform:scaleX(0.857);white-space:nowrap">56</div>
<div class="a" style="left:565px;top:540.6px;width:62.2px;font-size:14px;line-height:18px;text-align:right;color:#2a2a2a;transform-origin:100% 0;transform:scaleX(0.857);white-space:nowrap">208</div>
<div class="a" style="left:27px;top:563.6px;width:22.2px;font-size:14px;line-height:18px;text-align:right;color:#2a2a2a;transform-origin:100% 0;transform:scaleX(0.857);white-space:nowrap">29</div>
<div class="a nw" style="left:54.79px;top:564.25px;font-size:14px;line-height:18px;color:#000;transform-origin:0 0;transform:scale(0.910,0.985);">三枝 恵麻</div>
<div class="a nw" style="left:169.88px;top:564.00px;font-size:14px;line-height:18px;color:#000;transform-origin:0 0;transform:scale(0.910,1.000);">さえぐさ えま</div>
<div class="a nw" style="left:335.60px;top:565.00px;font-size:14px;line-height:18px;color:#000;transform-origin:0 0;transform:scale(0.938,1.000);">女</div>
<div class="a" style="left:370px;top:563.6px;width:62.2px;font-size:14px;line-height:18px;text-align:right;color:#2a2a2a;transform-origin:100% 0;transform:scaleX(0.857);white-space:nowrap">84</div>
<div class="a" style="left:435px;top:563.6px;width:62.2px;font-size:14px;line-height:18px;text-align:right;color:#2a2a2a;transform-origin:100% 0;transform:scaleX(0.857);white-space:nowrap">85</div>
<div class="a" style="left:500px;top:563.6px;width:62.2px;font-size:14px;line-height:18px;text-align:right;color:#2a2a2a;transform-origin:100% 0;transform:scaleX(0.857);white-space:nowrap">38</div>
<div class="a" style="left:565px;top:563.6px;width:62.2px;font-size:14px;line-height:18px;text-align:right;color:#2a2a2a;transform-origin:100% 0;transform:scaleX(0.857);white-space:nowrap">207</div>
<div class="a" style="left:27px;top:586.6px;width:22.2px;font-size:14px;line-height:18px;text-align:right;color:#2a2a2a;transform-origin:100% 0;transform:scaleX(0.857);white-space:nowrap">20</div>
<div class="a nw" style="left:54.79px;top:587.25px;font-size:14px;line-height:18px;color:#000;transform-origin:0 0;transform:scale(0.910,0.985);">古田 将也</div>
<div class="a nw" style="left:171.70px;top:587.00px;font-size:14px;line-height:18px;color:#000;transform-origin:0 0;transform:scale(0.910,1.000);">ふるた まさや</div>
<div class="a nw" style="left:334.49px;top:587.75px;font-size:14px;line-height:18px;color:#000;transform-origin:0 0;transform:scale(1.109,1.083);">男</div>
<div class="a" style="left:370px;top:586.6px;width:62.2px;font-size:14px;line-height:18px;text-align:right;color:#2a2a2a;transform-origin:100% 0;transform:scaleX(0.857);white-space:nowrap">85</div>
<div class="a" style="left:435px;top:586.6px;width:62.2px;font-size:14px;line-height:18px;text-align:right;color:#2a2a2a;transform-origin:100% 0;transform:scaleX(0.857);white-space:nowrap">98</div>
<div class="a" style="left:500px;top:586.6px;width:62.2px;font-size:14px;line-height:18px;text-align:right;color:#2a2a2a;transform-origin:100% 0;transform:scaleX(0.857);white-space:nowrap">23</div>
<div class="a" style="left:565px;top:586.6px;width:62.2px;font-size:14px;line-height:18px;text-align:right;color:#2a2a2a;transform-origin:100% 0;transform:scaleX(0.857);white-space:nowrap">206</div>
<div class="a" style="left:27px;top:609.6px;width:22.2px;font-size:14px;line-height:18px;text-align:right;color:#2a2a2a;transform-origin:100% 0;transform:scaleX(0.857);white-space:nowrap">49</div>
<div class="a nw" style="left:54.79px;top:611.37px;font-size:14px;line-height:18px;color:#000;transform-origin:0 0;transform:scale(0.910,0.914);">唐沢 亮</div>
<div class="a nw" style="left:170.79px;top:610.00px;font-size:14px;line-height:18px;color:#000;transform-origin:0 0;transform:scale(0.910,1.000);">からさわ りょう</div>
<div class="a nw" style="left:334.49px;top:610.75px;font-size:14px;line-height:18px;color:#000;transform-origin:0 0;transform:scale(1.109,1.083);">男</div>
<div class="a" style="left:370px;top:609.6px;width:62.2px;font-size:14px;line-height:18px;text-align:right;color:#2a2a2a;transform-origin:100% 0;transform:scaleX(0.857);white-space:nowrap">32</div>
<div class="a" style="left:435px;top:609.6px;width:62.2px;font-size:14px;line-height:18px;text-align:right;color:#2a2a2a;transform-origin:100% 0;transform:scaleX(0.857);white-space:nowrap">93</div>
<div class="a" style="left:500px;top:609.6px;width:62.2px;font-size:14px;line-height:18px;text-align:right;color:#2a2a2a;transform-origin:100% 0;transform:scaleX(0.857);white-space:nowrap">80</div>
<div class="a" style="left:565px;top:609.6px;width:62.2px;font-size:14px;line-height:18px;text-align:right;color:#2a2a2a;transform-origin:100% 0;transform:scaleX(0.857);white-space:nowrap">205</div>
<div class="a" style="left:27px;top:632.6px;width:22.2px;font-size:14px;line-height:18px;text-align:right;color:#2a2a2a;transform-origin:100% 0;transform:scaleX(0.857);white-space:nowrap">17</div>
<div class="a nw" style="left:54.79px;top:634.37px;font-size:14px;line-height:18px;color:#000;transform-origin:0 0;transform:scale(0.910,0.914);">市田 美希</div>
<div class="a nw" style="left:170.79px;top:633.00px;font-size:14px;line-height:18px;color:#000;transform-origin:0 0;transform:scale(0.910,1.000);">いちだ みき</div>
<div class="a nw" style="left:335.60px;top:634.00px;font-size:14px;line-height:18px;color:#000;transform-origin:0 0;transform:scale(0.938,1.000);">女</div>
<div class="a" style="left:370px;top:632.6px;width:62.2px;font-size:14px;line-height:18px;text-align:right;color:#2a2a2a;transform-origin:100% 0;transform:scaleX(0.857);white-space:nowrap">59</div>
<div class="a" style="left:435px;top:632.6px;width:62.2px;font-size:14px;line-height:18px;text-align:right;color:#2a2a2a;transform-origin:100% 0;transform:scaleX(0.857);white-space:nowrap">94</div>
<div class="a" style="left:500px;top:632.6px;width:62.2px;font-size:14px;line-height:18px;text-align:right;color:#2a2a2a;transform-origin:100% 0;transform:scaleX(0.857);white-space:nowrap">48</div>
<div class="a" style="left:565px;top:632.6px;width:62.2px;font-size:14px;line-height:18px;text-align:right;color:#2a2a2a;transform-origin:100% 0;transform:scaleX(0.857);white-space:nowrap">201</div>
<div class="a" style="left:27px;top:655.6px;width:22.2px;font-size:14px;line-height:18px;text-align:right;color:#2a2a2a;transform-origin:100% 0;transform:scaleX(0.857);white-space:nowrap">11</div>
<div class="a nw" style="left:54.79px;top:656.25px;font-size:14px;line-height:18px;color:#000;transform-origin:0 0;transform:scale(0.910,0.985);">藤本 ヒロ</div>
<div class="a nw" style="left:171.70px;top:656.00px;font-size:14px;line-height:18px;color:#000;transform-origin:0 0;transform:scale(0.910,1.000);">ふじもと ひろし</div>
<div class="a nw" style="left:334.49px;top:656.75px;font-size:14px;line-height:18px;color:#000;transform-origin:0 0;transform:scale(1.109,1.083);">男</div>
<div class="a" style="left:370px;top:655.6px;width:62.2px;font-size:14px;line-height:18px;text-align:right;color:#2a2a2a;transform-origin:100% 0;transform:scaleX(0.857);white-space:nowrap">53</div>
<div class="a" style="left:435px;top:655.6px;width:62.2px;font-size:14px;line-height:18px;text-align:right;color:#2a2a2a;transform-origin:100% 0;transform:scaleX(0.857);white-space:nowrap">92</div>
<div class="a" style="left:500px;top:655.6px;width:62.2px;font-size:14px;line-height:18px;text-align:right;color:#2a2a2a;transform-origin:100% 0;transform:scaleX(0.857);white-space:nowrap">55</div>
<div class="a" style="left:565px;top:655.6px;width:62.2px;font-size:14px;line-height:18px;text-align:right;color:#2a2a2a;transform-origin:100% 0;transform:scaleX(0.857);white-space:nowrap">200</div>
<div class="a" style="left:27px;top:678.6px;width:22.2px;font-size:14px;line-height:18px;text-align:right;color:#2a2a2a;transform-origin:100% 0;transform:scaleX(0.857);white-space:nowrap">44</div>
<div class="a nw" style="left:55.70px;top:679.25px;font-size:14px;line-height:18px;color:#000;transform-origin:0 0;transform:scale(0.910,0.985);">菅沼 礼子</div>
<div class="a nw" style="left:170.79px;top:679.00px;font-size:14px;line-height:18px;color:#000;transform-origin:0 0;transform:scale(0.910,1.000);">すがぬま れいこ</div>
<div class="a nw" style="left:335.60px;top:680.00px;font-size:14px;line-height:18px;color:#000;transform-origin:0 0;transform:scale(0.938,1.000);">女</div>
<div class="a" style="left:370px;top:678.6px;width:62.2px;font-size:14px;line-height:18px;text-align:right;color:#2a2a2a;transform-origin:100% 0;transform:scaleX(0.857);white-space:nowrap">77</div>
<div class="a" style="left:435px;top:678.6px;width:62.2px;font-size:14px;line-height:18px;text-align:right;color:#2a2a2a;transform-origin:100% 0;transform:scaleX(0.857);white-space:nowrap">66</div>
<div class="a" style="left:500px;top:678.6px;width:62.2px;font-size:14px;line-height:18px;text-align:right;color:#2a2a2a;transform-origin:100% 0;transform:scaleX(0.857);white-space:nowrap">57</div>
<div class="a" style="left:565px;top:678.6px;width:62.2px;font-size:14px;line-height:18px;text-align:right;color:#2a2a2a;transform-origin:100% 0;transform:scaleX(0.857);white-space:nowrap">200</div>
<div class="a" style="left:27px;top:701.6px;width:22.2px;font-size:14px;line-height:18px;text-align:right;color:#2a2a2a;transform-origin:100% 0;transform:scaleX(0.857);white-space:nowrap">16</div>
<div class="a nw" style="left:54.79px;top:702.25px;font-size:14px;line-height:18px;color:#000;transform-origin:0 0;transform:scale(0.910,0.985);">真矢 ヒカル</div>
<div class="a nw" style="left:168.97px;top:702.00px;font-size:14px;line-height:18px;color:#000;transform-origin:0 0;transform:scale(0.910,1.000);">まや ひかる</div>
<div class="a nw" style="left:335.60px;top:703.00px;font-size:14px;line-height:18px;color:#000;transform-origin:0 0;transform:scale(0.938,1.000);">女</div>
<div class="a" style="left:370px;top:701.6px;width:62.2px;font-size:14px;line-height:18px;text-align:right;color:#2a2a2a;transform-origin:100% 0;transform:scaleX(0.857);white-space:nowrap">92</div>
<div class="a" style="left:435px;top:701.6px;width:62.2px;font-size:14px;line-height:18px;text-align:right;color:#2a2a2a;transform-origin:100% 0;transform:scaleX(0.857);white-space:nowrap">38</div>
<div class="a" style="left:500px;top:701.6px;width:62.2px;font-size:14px;line-height:18px;text-align:right;color:#2a2a2a;transform-origin:100% 0;transform:scaleX(0.857);white-space:nowrap">67</div>
<div class="a" style="left:565px;top:701.6px;width:62.2px;font-size:14px;line-height:18px;text-align:right;color:#2a2a2a;transform-origin:100% 0;transform:scaleX(0.857);white-space:nowrap">197</div>
<div class="a" style="left:52px;top:240px;width:1px;height:478px;background:#000"></div>
<div class="a" style="left:168px;top:240px;width:1px;height:478px;background:#000"></div>
<div class="a" style="left:332px;top:240px;width:1px;height:478px;background:#000"></div>
<div class="a" style="left:370px;top:240px;width:1px;height:478px;background:#000"></div>
<div class="a" style="left:435px;top:240px;width:1px;height:478px;background:#000"></div>
<div class="a" style="left:500px;top:240px;width:1px;height:478px;background:#000"></div>
<div class="a" style="left:565px;top:240px;width:1px;height:478px;background:#000"></div>
<div class="a" style="left:630px;top:240px;width:1px;height:478px;background:#000"></div>
<div class="a" style="left:28px;top:263px;width:603px;height:1px;background:#000"></div>
<div class="a" style="left:28px;top:286px;width:603px;height:1px;background:#000"></div>
<div class="a" style="left:28px;top:309px;width:603px;height:1px;background:#000"></div>
<div class="a" style="left:28px;top:332px;width:603px;height:1px;background:#000"></div>
<div class="a" style="left:28px;top:355px;width:603px;height:1px;background:#000"></div>
<div class="a" style="left:28px;top:378px;width:603px;height:1px;background:#000"></div>
<div class="a" style="left:28px;top:401px;width:603px;height:1px;background:#000"></div>
<div class="a" style="left:28px;top:424px;width:603px;height:1px;background:#000"></div>
<div class="a" style="left:28px;top:447px;width:603px;height:1px;background:#000"></div>
<div class="a" style="left:28px;top:470px;width:603px;height:1px;background:#000"></div>
<div class="a" style="left:28px;top:493px;width:603px;height:1px;background:#000"></div>
<div class="a" style="left:28px;top:516px;width:603px;height:1px;background:#000"></div>
<div class="a" style="left:28px;top:539px;width:603px;height:1px;background:#000"></div>
<div class="a" style="left:28px;top:562px;width:603px;height:1px;background:#000"></div>
<div class="a" style="left:28px;top:585px;width:603px;height:1px;background:#000"></div>
<div class="a" style="left:28px;top:608px;width:603px;height:1px;background:#000"></div>
<div class="a" style="left:28px;top:631px;width:603px;height:1px;background:#000"></div>
<div class="a" style="left:28px;top:654px;width:603px;height:1px;background:#000"></div>
<div class="a" style="left:28px;top:677px;width:603px;height:1px;background:#000"></div>
<div class="a" style="left:28px;top:700px;width:603px;height:1px;background:#000"></div>
<div class="a" style="left:28px;top:723px;width:603px;height:1px;background:#000"></div>
<div class="a" style="left:695px;top:241px;width:1px;height:23px;background:#000"></div>
<div class="a" style="left:331px;top:239px;width:41px;height:25px;border:2px solid #217346"></div>
<div class="a" style="left:333px;top:241px;width:37px;height:22px;border:1px solid #fff;border-bottom:none"></div>
<div class="a" style="left:368px;top:260px;width:6px;height:6px;background:#217346;border-left:1px solid #fff;border-top:1px solid #fff"></div>
<div class="a" style="left:103px;top:262px;width:267px;height:406px;background:#fff;border:1px solid #c6c6c6;border-right:none;border-bottom:none;box-shadow:0 2px 3px rgba(0,0,0,0.18)"></div>
<svg class="a" style="left:106px;top:265px" width="24" height="100">
<text x="2" y="9" font-size="8.5" font-family="Liberation Sans" font-weight="bold" fill="#3b78c4">A</text>
<text x="2" y="18" font-size="8.5" font-family="Liberation Sans" font-weight="bold" fill="#8e44ad">Z</text>
<path d="M13.5 3V18M10.5 15L13.5 18.5L16.5 15" fill="none" stroke="#444" stroke-width="1.1"/>
<text x="2" y="33" font-size="8.5" font-family="Liberation Sans" font-weight="bold" fill="#8e44ad">Z</text>
<text x="2" y="42" font-size="8.5" font-family="Liberation Sans" font-weight="bold" fill="#3b78c4">A</text>
<path d="M13.5 27V42M10.5 39L13.5 42.5L16.5 39" fill="none" stroke="#444" stroke-width="1.1"/>
<path d="M2 76H16L11 82V88H8V82Z" fill="#b8b8b8"/>
<path d="M11 84L17 90M17 84L11 90" stroke="#b8b8b8" stroke-width="1.5"/>
</svg>
<div class="a nw" style="left:132.71px;top:266.88px;font-size:12px;line-height:16px;color:#262626;transform-origin:0 0;transform:scale(1.092,1.008);">昇順(<span style="text-decoration:underline">S</span>)</div>
<div class="a nw" style="left:132.94px;top:290.45px;font-size:12px;line-height:16px;color:#262626;transform-origin:0 0;transform:scale(1.055,1.023);">降順(<span style="text-decoration:underline">O</span>)</div>
<div class="a nw" style="left:134.00px;top:314.78px;font-size:12px;line-height:16px;color:#262626;transform-origin:0 0;transform:scale(0.946,1.008);">色で並べ替え(<span style="text-decoration:underline">T</span>)</div>
<div class="a" style="left:134px;top:335px;width:235px;height:1px;background:#dcdcdc"></div>
<div class="a nw" style="left:133.80px;top:339.76px;font-size:12px;line-height:16px;color:#a6a6a6;transform-origin:0 0;transform:scale(0.813,1.069);">"性別" からフィルターをクリア(<span style="text-decoration:underline">C</span>)</div>
<div class="a nw" style="left:134.00px;top:362.68px;font-size:12px;line-height:16px;color:#a6a6a6;transform-origin:0 0;transform:scale(0.842,1.108);">色フィルター(<span style="text-decoration:underline">I</span>)</div>
<div class="a nw" style="left:133.20px;top:386.53px;font-size:12px;line-height:16px;color:#262626;transform-origin:0 0;transform:scale(0.796,1.092);">テキスト フィルター(<span style="text-decoration:underline">F</span>)</div>
<div class="a sub" style="left:356px;top:319px"></div>
<div class="a sub" style="left:356px;top:369px;border-left-color:#c0c0c0"></div>
<div class="a sub" style="left:356px;top:393px"></div>
<div class="a" style="left:134px;top:409px;width:235px;height:1px;background:#dcdcdc"></div>
<div class="a" style="left:133px;top:415px;width:230px;height:21px;background:#fff;border:1px solid #ababab"></div>
<div class="a nw" style="left:135.30px;top:418.45px;font-size:12px;line-height:16px;color:#6d6d6d;transform-origin:0 0;transform:scale(1.026,0.775);">検索</div>
<svg class="a" style="left:346px;top:417px" width="16" height="16">
<circle cx="9.5" cy="6.5" r="4" fill="none" stroke="#3b78c4" stroke-width="1.6"/>
<path d="M6.8 9.2L2.5 13.5" stroke="#3b78c4" stroke-width="2"/>
</svg>
<div class="a" style="left:133px;top:440px;width:230px;height:168px;background:#fff;border:1px solid #dadada"></div>
<div class="a" style="left:146px;top:451px;width:0;height:36px;border-left:1px dotted #555"></div>
<div class="a" style="left:147px;top:451px;width:9px;height:0;border-top:1px dotted #555"></div>
<div class="a" style="left:147px;top:469px;width:9px;height:0;border-top:1px dotted #555"></div>
<div class="a" style="left:147px;top:486px;width:9px;height:0;border-top:1px dotted #555"></div>
<div class="a" style="left:156px;top:444px;width:11px;height:11px;background:#fff;border:1px solid #333"></div>
<div class="a" style="left:156px;top:462px;width:11px;height:11px;background:#fff;border:1px solid #333"></div>
<div class="a" style="left:156px;top:480px;width:11px;height:11px;background:#fff;border:1px solid #333"></div>
<div class="a" style="left:158.5px;top:446.5px;width:6px;height:6px;background:#000"></div>
<svg class="a" style="left:156px;top:480px" width="11" height="11"><path d="M2 5.5L4.5 8L9 2.5" fill="none" stroke="#000" stroke-width="1.8"/></svg>
<div class="a nw" style="left:168.98px;top:443.96px;font-size:12px;line-height:16px;color:#262626;transform-origin:0 0;transform:scale(1.023,0.769);">(すべて選択)</div>
<div class="a" style="left:168px;top:459px;width:16px;height:16px;background:#0a6ad4;outline:1px dotted #000;outline-offset:-1px"></div>
<div class="a nw" style="left:171.00px;top:458.40px;font-size:12px;line-height:16px;color:#fff;transform-origin:0 0;transform:scale(1.000,1.200);">女</div>
<div class="a nw" style="left:169.89px;top:479.18px;font-size:12px;line-height:16px;color:#262626;transform-origin:0 0;transform:scale(1.111,0.909);">男</div>
<div class="a" style="left:205px;top:627px;width:73px;height:25px;background:#e5f1fb;border:1px solid #0078d7"></div>
<div class="a nw" style="left:232.22px;top:630.86px;font-size:13px;line-height:17px;color:#000;transform-origin:0 0;transform:scale(0.976,1.011);">OK</div>
<div class="a" style="left:289px;top:627px;width:73px;height:25px;background:#e1e1e1;border:1px solid #adadad"></div>
<div class="a nw" style="left:301.10px;top:631.15px;font-size:12px;line-height:16px;color:#000;transform-origin:0 0;transform:scale(0.798,1.050);">キャンセル</div>
<div class="a" style="left:104px;top:657px;width:265px;height:1px;background:#dce6f0"></div>
<div class="a" style="left:104px;top:658px;width:265px;height:10px;background:linear-gradient(#f8f8f8,#e9e9e9)"></div>
<svg class="a" style="left:358px;top:658px" width="10" height="10"><g fill="#999"><rect x="6" y="2" width="2" height="2"/><rect x="2" y="6" width="2" height="2"/><rect x="6" y="6" width="2" height="2"/></g></svg>
<div class="a" style="left:348px;top:238px;width:29px;height:29px;border:1.5px solid #f00000"></div>
<div class="a" style="left:148px;top:475px;width:60px;height:35px;border:1.5px solid #f00000"></div>
<div class="a" style="left:198px;top:619px;width:82px;height:35px;border:1.5px solid #f00000"></div>
<div class="a" style="left:329px;top:41px;width:57px;height:35px;border:1.5px solid #f00000"></div>
<svg class="a" style="left:0;top:0" width="722" height="718">
<path d="M354.6 272.3 L217 477" stroke="#f51010" stroke-width="1.25" stroke-dasharray="6,4" fill="none"/>
<path d="M212 484 L214.1 474.6 L219.9 478.5Z" fill="#f51010"/>
</svg>
<svg class="a" style="left:259.5px;top:640.3px" width="16" height="24">
<path d="M1 1V18L5 14L8 21L11 20L8 13H13Z" fill="#fff" stroke="#222" stroke-width="1"/>
</svg>
</body></html>
